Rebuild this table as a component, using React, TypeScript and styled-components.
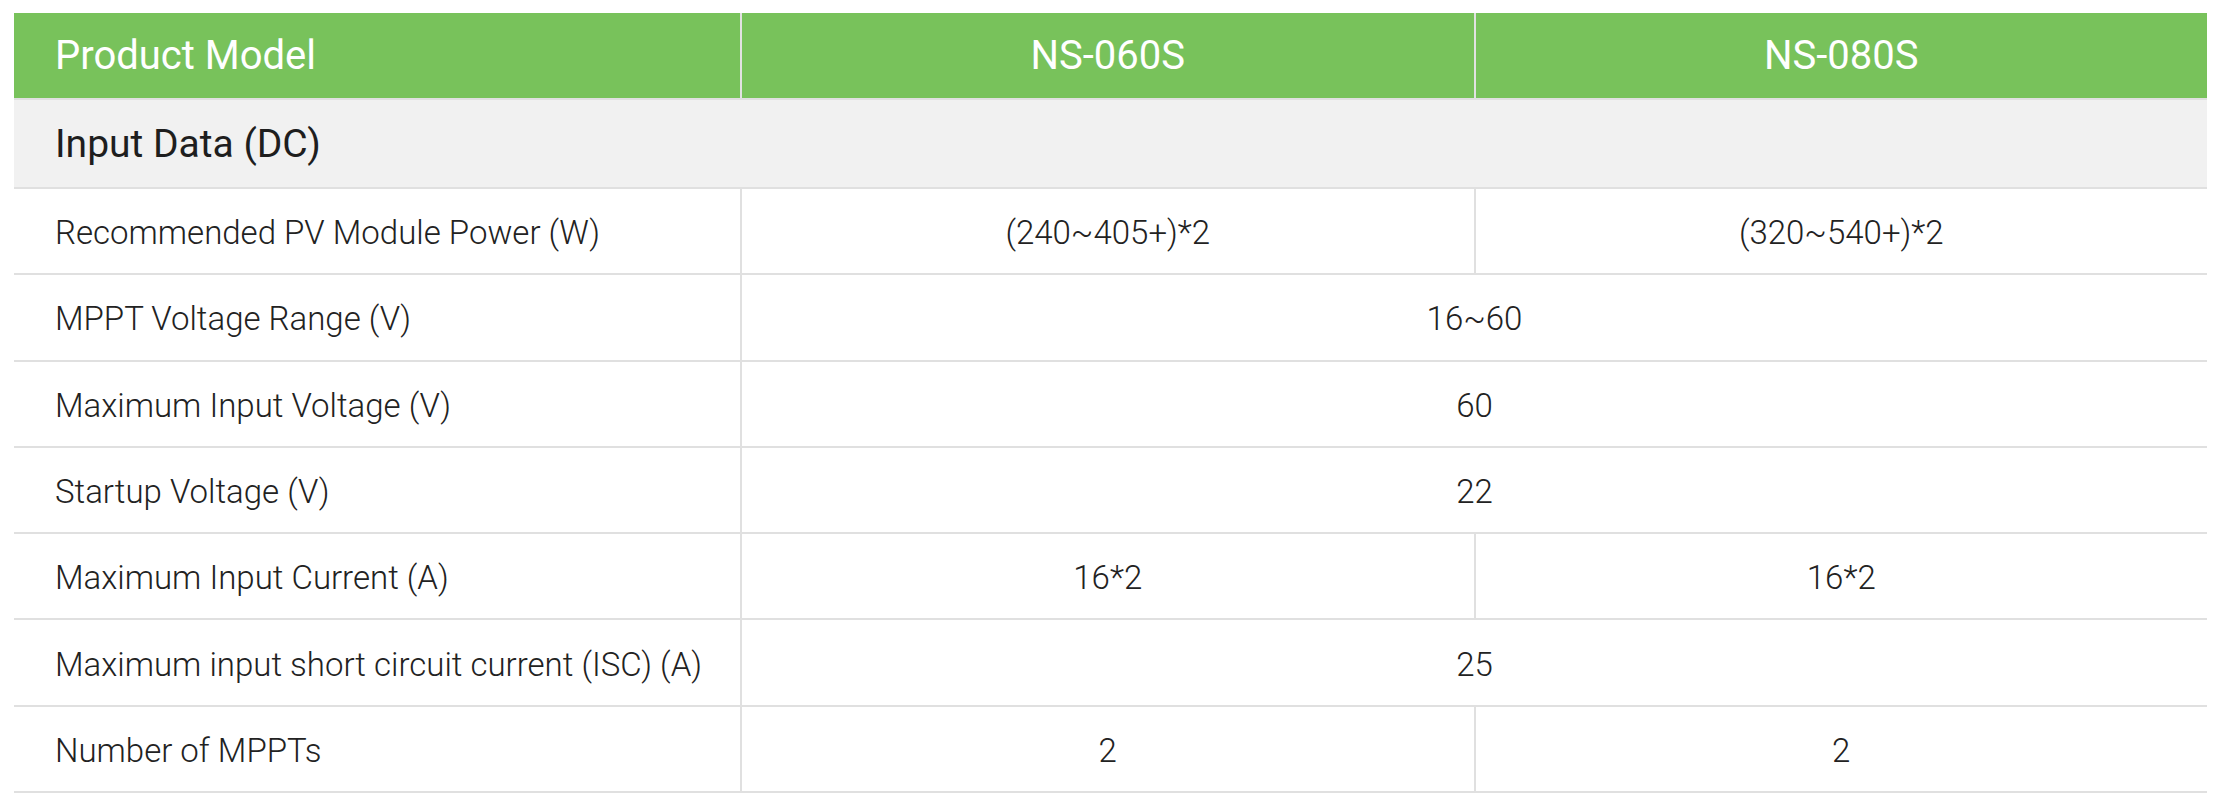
import React from 'react';
import styled, { createGlobalStyle } from 'styled-components';

const GlobalStyle = createGlobalStyle`
  body {
    margin: 0;
    background: #fff;
    font-family: Roboto, "Liberation Sans", Arial, sans-serif;
    color: #222;
  }
`;

const Page = styled.div`
  padding: 13px 11px 0 14px;
`;

const Table = styled.div`
  width: 2193px;
`;

const Row = styled.div<{ $height: number; $bg?: string }>`
  display: grid;
  grid-template-columns: 726px 1fr 1fr;
  height: ${p => p.$height}px;
  box-sizing: border-box;
  border-bottom: 2px solid #e0e0e0;
  background: ${p => p.$bg || '#fff'};
`;

const HeadCell = styled.div<{ $left?: boolean }>`
  display: flex;
  align-items: center;
  justify-content: ${p => (p.$left ? 'flex-start' : 'center')};
  padding-left: ${p => (p.$left ? '41px' : '0')};
  border-left: ${p => (p.$left ? 'none' : '2px solid #e2e2e2')};
  color: #fff;
  font-size: 40px;
  font-weight: 400;
`;

const SectionTitle = styled.div`
  grid-column: 1 / -1;
  display: flex;
  align-items: center;
  padding-left: 41px;
  font-size: 39px;
  font-weight: 400;
  color: #1e1e1e;
`;

const Label = styled.div`
  display: flex;
  align-items: center;
  padding: 3px 0 0 41px;
  font-size: 33px;
  font-weight: 300;
  color: #222;
`;

const Value = styled.div<{ $span?: boolean }>`
  grid-column: ${p => (p.$span ? 'span 2' : 'auto')};
  display: flex;
  align-items: center;
  justify-content: center;
  padding-top: 3px;
  border-left: 2px solid #e0e0e0;
  font-size: 33px;
  font-weight: 300;
  color: #222;
`;

const rows: { label: string; values: string[] }[] = [
  { label: 'Recommended PV Module Power (W)', values: ['(240~405+)*2', '(320~540+)*2'] },
  { label: 'MPPT Voltage Range (V)', values: ['16~60'] },
  { label: 'Maximum Input Voltage (V)', values: ['60'] },
  { label: 'Startup Voltage (V)', values: ['22'] },
  { label: 'Maximum Input Current (A)', values: ['16*2', '16*2'] },
  { label: 'Maximum input short circuit current (ISC) (A)', values: ['25'] },
  { label: 'Number of MPPTs', values: ['2', '2'] },
];

export default function App() {
  return (
    <Page>
      <GlobalStyle />
      <Table>
        <Row $height={87} $bg="#78c25b">
          <HeadCell $left>Product Model</HeadCell>
          <HeadCell>NS-060S</HeadCell>
          <HeadCell>NS-080S</HeadCell>
        </Row>
        <Row $height={89} $bg="#f1f1f1">
          <SectionTitle>Input Data (DC)</SectionTitle>
        </Row>
        {rows.map((r, i) => (
          <Row key={i} $height={86.3}>
            <Label>{r.label}</Label>
            {r.values.map((v, j) => (
              <Value key={j} $span={r.values.length === 1}>{v}</Value>
            ))}
          </Row>
        ))}
      </Table>
    </Page>
  );
}
